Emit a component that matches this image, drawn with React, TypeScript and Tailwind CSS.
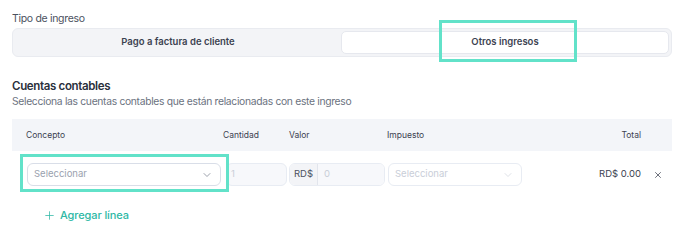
import { ChevronDown, Plus, X } from "lucide-react";

function Select({ disabled }: { disabled?: boolean }) {
    return (
        <div className={`flex items-center justify-between h-[23px] rounded-md border px-[6px] bg-white
        ${disabled ? 'border-[#e8ecf3]' : 'border-[#d9dee8]'}`}>
            <span className={`text-[9.5px] ${disabled ? 'text-[#c9ced8]' : 'text-[#9aa1ae]'}`}>Seleccionar</span>
            <ChevronDown className={`w-3 h-3 mr-[1px] ${disabled ? 'text-[#d3d7df]' : 'text-[#7b8290]'}`} strokeWidth={1.5} />
        </div>
    );
}

export default function App() {
    return (
        <div className="w-[688px] h-[244px] bg-white pl-3 pr-4 pt-[11px] font-['Inter',sans-serif] text-[#2d3340] relative">
            <p className="text-[10.5px] tracking-[-0.03em] text-[#4b5160] leading-4">Tipo de ingreso</p>
            <div className="mt-[1px] h-[29px] rounded-md bg-[#f3f4f7] border border-[#e9ebf0] flex items-center p-[2px]">
                <div className="flex-1 flex justify-center items-center text-[9.5px] font-semibold text-[#3c4251]">
                    Pago a factura de cliente
                </div>
                <div className="flex-1 h-[23px] rounded-[5px] bg-white border border-[#e6e8ee] flex justify-center items-center text-[9.5px] font-semibold text-[#3c4251]">
                    Otros ingresos
                </div>
            </div>

            <h2 className="mt-[21px] text-[11.5px] tracking-[-0.03em] font-semibold text-[#2a303c] leading-4">Cuentas contables</h2>
            <p className="text-[10.3px] tracking-[-0.03em] text-[#6b7280] leading-[14px]">Selecciona las cuentas contables que están relacionadas con este ingreso</p>

            <div className="mt-[11px] h-8 bg-[#f3f5f9] flex items-center pl-[14px] text-[8.5px] text-[#3c4251]">
                <div className="w-[197px]">Concepto</div>
                <div className="w-[66px]">Cantidad</div>
                <div className="w-[98px]">Valor</div>
                <div className="w-[134px]">Impuesto</div>
                <div className="flex-1 text-right">Total</div>
                <div className="w-[31px]" />
            </div>

            <div className="h-[47px] flex items-center pl-[15px]">
                <div className="w-[194px]"><Select /></div>
                <div className="ml-[5px] w-[61px] h-[23px] rounded-md border border-[#e8ecf3] bg-[#f7f8fb] flex items-center px-[4px] text-[9.5px] text-[#c9ced8]">1</div>
                <div className="ml-[2px] w-[96px] h-[23px] rounded-md border border-[#e8ecf3] flex items-center overflow-hidden">
                    <div className="h-full px-[4px] flex items-center bg-[#f3f4f7] border-r border-[#e2e5ec] text-[9.5px] text-[#4b5160]">RD$</div>
                    <div className="flex-1 h-full bg-[#f7f8fb] flex items-center px-[6px] text-[9.5px] text-[#c9ced8]">0</div>
                </div>
                <div className="ml-[3px] w-[134px]"><Select disabled /></div>
                <div className="flex-1 text-right text-[9.5px] text-[#3c4251]">RD$ 0.00</div>
                <div className="w-[31px] flex justify-center">
                    <X className="w-2.5 h-2.5 text-[#3c4251] ml-[2px]" strokeWidth={1.8} />
                </div>
            </div>

            <div className="mt-[9px] pl-[31px] flex items-center gap-[4px] text-[11px] tracking-[-0.01em] font-medium text-[#2eb8a5] leading-4">
                <Plus className="w-[13px] h-[13px]" strokeWidth={1.4} />
                Agregar línea
            </div>

            {/* annotation highlights */}
            <div className="absolute left-[439px] top-[20px] w-[138px] h-[42px] border-[3px] border-[#62e2c9]" />
            <div className="absolute left-[20px] top-[154px] w-[209px] h-[38px] border-[3px] border-[#62e2c9]" />
        </div>
    );
}
